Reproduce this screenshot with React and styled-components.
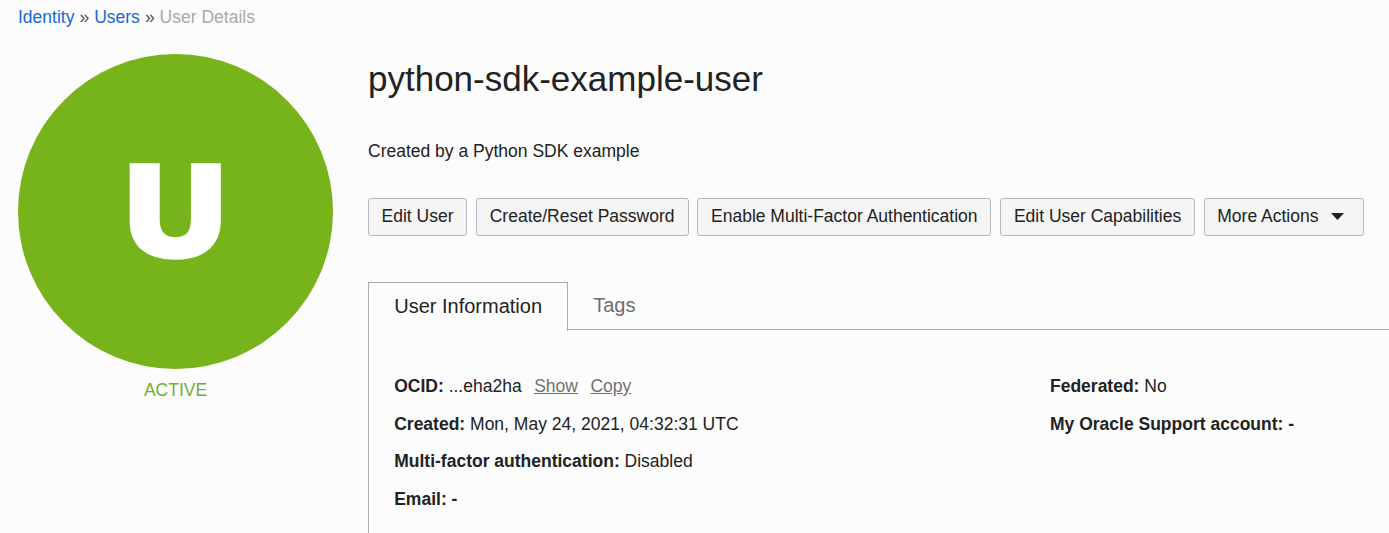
import React from "react";
import styled, { createGlobalStyle } from "styled-components";

const Global = createGlobalStyle`
  * { box-sizing: border-box; }
  html, body { margin: 0; height: 100%; overflow: hidden; }
  body { background: #fcfcfc; color: #222; font: 17.5px/20px "Liberation Sans", Arial, sans-serif; }
`;
const Page = styled.div`height: 533px; overflow: hidden; display: flex; flex-direction: column; white-space: nowrap;`;
const Breadcrumbs = styled.nav`padding: 7px 18px 0; height: 54px; display: flex; gap: 5px; color: #555;`;
const Crumb = styled.a`color: #146ad0;`;
const Current = styled.span`color: #aaa;`;
const Body = styled.div`flex: 1; display: grid; grid-template-columns: 315px 1fr; column-gap: 35px; padding-left: 18px;`;
const Aside = styled.aside`display: flex; flex-direction: column; align-items: center;`;
const Avatar = styled.div`width: 315px; height: 315px; border-radius: 50%; background: #77b31a; display: flex; align-items: center; justify-content: center;`;
const Letter = styled.span`
  font: 800 134px/134px "Open Sans", sans-serif; color: #fff;
  -webkit-text-stroke: 1.4px #fff;
  transform: translate(-0.5px, -4.3px) scale(1.094, 0.973);
`;
const Status = styled.div`color: #71ad35; margin-top: 11px;`;
const Main = styled.main`display: flex; flex-direction: column; min-width: 0;`;
const Title = styled.h1`margin: 5px 0 0; font-size: 35px; line-height: 40px; font-weight: 400;`;
const Description = styled.p`margin: 42px 0 0;`;
const Actions = styled.div`display: flex; gap: 8.75px; margin-top: 37px;`;
const Button = styled.button`
  width: ${p => p.$width}px; height: 38px; padding: 0 0 2px; border: 1px solid #b2b6c0; border-radius: 3px;
  background: #f5f5f5; color: #222; font: inherit; display: flex; align-items: center; justify-content: center;
`;
const MenuButton = styled(Button)`justify-content: flex-start; gap: 13px; padding-left: 12.5px;`;
const Caret = styled.svg`width: 13px; height: 7px; margin-top: 1px; fill: #222;`;
const Tabs = styled.div`display: flex; height: 49px; margin-top: 46px;`;
const ActiveTab = styled.div`width: 200px; border: 1px solid #a9a9ae; border-bottom: 0; padding-left: 25.2px; font-size: 20px; line-height: 46px;`;
const TabRest = styled.div`flex: 1; height: 48px; border-bottom: 1px solid #a9a9ae; padding-left: 25.2px; font-size: 20px; line-height: 46px; color: #6d6d6d;`;
const Panel = styled.section`flex: 1; border-left: 1px solid #a9a9ae; padding: 45px 0 0 25.2px; display: grid; grid-template-columns: 655.8px 1fr; align-content: start;`;
const Column = styled.div`display: flex; flex-direction: column; gap: 17.6px;`;
const Field = styled.div`height: 20px;`;
const Link = styled.a`color: #717171; text-decoration: underline; margin-left: 12.5px;`;

export default function App() {
  return (
    <Page>
      <Global />
      <Breadcrumbs><Crumb>Identity</Crumb><span>»</span><Crumb>Users</Crumb><span>»</span><Current>User Details</Current></Breadcrumbs>
      <Body>
        <Aside>
          <Avatar><Letter>U</Letter></Avatar>
          <Status>ACTIVE</Status>
        </Aside>
        <Main>
          <Title>python-sdk-example-user</Title>
          <Description>Created by a Python SDK example</Description>
          <Actions>
            <Button $width={99}>Edit User</Button>
            <Button $width={212.8}>Create/Reset Password</Button>
            <Button $width={294}>Enable Multi-Factor Authentication</Button>
            <Button $width={195}>Edit User Capabilities</Button>
            <MenuButton $width={160}>More Actions<Caret viewBox="0 0 13 7"><path d="M0 0H13L6.5 7Z" /></Caret></MenuButton>
          </Actions>
          <Tabs><ActiveTab>User Information</ActiveTab><TabRest>Tags</TabRest></Tabs>
          <Panel>
            <Column>
              <Field><b>OCID:</b> ...eha2ha<Link>Show</Link><Link>Copy</Link></Field>
              <Field><b>Created:</b> Mon, May 24, 2021, 04:32:31 UTC</Field>
              <Field><b>Multi-factor authentication:</b> Disabled</Field>
              <Field><b>Email: -</b></Field>
            </Column>
            <Column>
              <Field><b>Federated:</b> No</Field>
              <Field><b>My Oracle Support account: -</b></Field>
            </Column>
          </Panel>
        </Main>
      </Body>
    </Page>
  );
}
